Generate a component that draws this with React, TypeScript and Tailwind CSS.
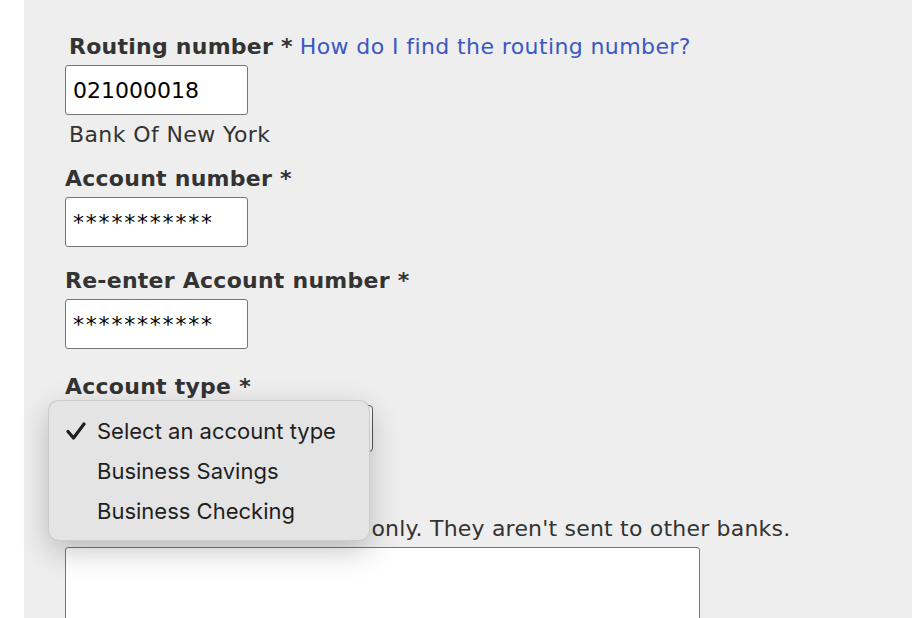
const labelCls =
  "block text-[22px] leading-[26px] font-bold tracking-[0.25px] text-[#333333] font-['DejaVu_Sans',Verdana,sans-serif]";
const inputCls =
  "h-[50px] w-[183px] rounded-[3px] border border-[#767676] bg-white px-[7px] text-[22px] text-black font-['DejaVu_Sans',Verdana,sans-serif] outline-none";

const CheckMark = () => (
  <svg width="20" height="18" viewBox="0 0 20 18" className="block">
    <path
      d="M2 9.5 L7.5 16 L18 2"
      fill="none"
      stroke="#1e1e1e"
      strokeWidth="3.2"
      strokeLinecap="round"
      strokeLinejoin="round"
    />
  </svg>
);

const AccountTypeMenu = () => {
  const options = ["Select an account type", "Business Savings", "Business Checking"];

  return (
    <div className="absolute left-[-18px] top-[-6px] z-10 h-[141px] w-[322px] rounded-[11px] border border-black/10 bg-[#e4e4e4] pt-[10px] shadow-[0_10px_30px_rgba(0,0,0,0.22)] font-['Inter',sans-serif]">
      {options.map((opt, i) => (
        <div key={opt} className="flex h-[40px] items-center text-[22px] leading-[40px] text-[#1f1f1f]">
          <span className="flex w-[48px] justify-end pr-[11px]">{i === 0 && <CheckMark />}</span>
          <span>{opt}</span>
        </div>
      ))}
    </div>
  );
};

export default function App() {
  return (
    <div className="flex h-[618px] w-full overflow-hidden bg-white">
      <div className="ml-[24px] flex-1 bg-[#eeeeee] pl-[41px] pt-[34px] font-['DejaVu_Sans',Verdana,sans-serif]">
        {/* routing */}
        <div className="pl-[4px] text-[22px] leading-[26px]">
          <span className="font-bold tracking-[0.25px] text-[#333333]">Routing number *</span>{" "}
          <a href="#" className="tracking-[0.4px] text-[#3b58c2]">
            How do I find the routing number?
          </a>
        </div>
        <input className={`mt-[5px] block ${inputCls}`} defaultValue="021000018" />
        <div className="mt-[7px] pl-[4px] text-[22px] leading-[26px] tracking-[0.4px] text-[#333333]">
          Bank Of New York
        </div>

        {/* account number */}
        <label className={`mt-[18px] ${labelCls}`}>Account number *</label>
        <input className={`mt-[5px] block tracking-[1.8px] ${inputCls}`} defaultValue="***********" />

        <label className={`mt-[21px] ${labelCls}`}>Re-enter Account number *</label>
        <input className={`mt-[5px] block tracking-[1.8px] ${inputCls}`} defaultValue="***********" />

        {/* account type, menu open */}
        <label className={`mt-[25px] ${labelCls}`}>Account type *</label>
        <div className="relative mt-[5px] h-[47px] w-[308px] rounded-[4px] border border-[#555555] bg-white">
          <AccountTypeMenu />
        </div>

        <p className="mt-[64px] text-[22px] leading-[26px] text-[#333333]">
          <span className="tracking-[-0.15px]">Nicknames are for your use </span>
          <span className="tracking-[0.2px]">only. They aren't sent to other banks.</span>
        </p>
        <textarea className="mt-[5px] block h-[120px] w-[635px] resize-none rounded-[3px] border border-[#767676] bg-white outline-none" />
      </div>
    </div>
  );
}
